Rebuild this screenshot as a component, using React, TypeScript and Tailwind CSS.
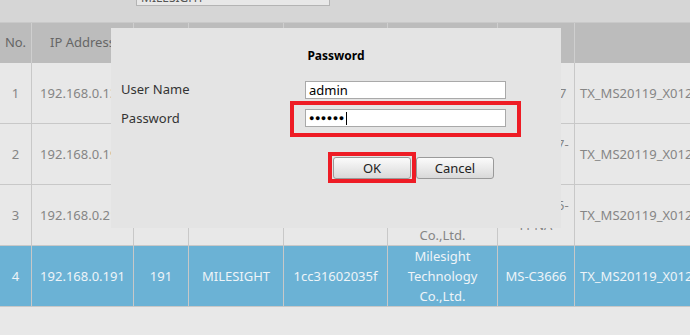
import React from "react";

const widths = [32, 102, 55, 95, 104, 110, 77, 240];

type Row = string[];

const rows: Row[] = [
  ["1", "192.168.0.136", "136", "MILESIGHT", "1cc316020a1b", "Milesight Technology Co.,Ltd.", "MS-C2967", "TX_MS20119_X0120_2016"],
  ["2", "192.168.0.195", "195", "MILESIGHT", "1cc31601f2c4", "Milesight Technology Co.,Ltd.", "MS-C2967-FPNB", "TX_MS20119_X0120_2016"],
  ["3", "192.168.0.217", "217", "MILESIGHT", "1cc3160210ee", "Milesight Technology Co.,Ltd.", "MS-C2965-FPNA", "TX_MS20119_X0120_2016"],
  ["4", "192.168.0.191", "191", "MILESIGHT", "1cc31602035f", "Milesight Technology Co.,Ltd.", "MS-C3666", "TX_MS20119_X0120_2016"],
];

const Cell: React.FC<{ w: number; last?: boolean; left?: boolean; children?: React.ReactNode }> = ({ w, last, left, children }) => (
  <div
    style={{ width: w }}
    className={`shrink-0 h-full flex items-center px-[4px] leading-[20px] ${left ? "justify-start pl-[5px] whitespace-nowrap" : "justify-center text-center"} ${last ? "" : "border-r border-[#c8c8c8]"}`}
  >
    {children}
  </div>
);

export default function App() {
  return (
    <div className="relative w-[690px] h-[335px] overflow-hidden bg-[#e8e8e8] font-['Noto_Sans',sans-serif] text-[12px]">
      {/* top search strip */}
      <div className="h-[22px] bg-[#d6d6d6] overflow-hidden">
        <div className="ml-[136px] -mt-[14px] w-[194px] h-[20px] bg-[#e8e8e8] border border-[#b4b4b4] pl-[4px] pt-[2px] text-[12px] text-[#555] leading-[18px]">
          MILESIGHT
        </div>
      </div>

      {/* header */}
      <div className="flex h-[41px] bg-[#bcbcbc] border-t border-[#c9c9c9] text-[#666] text-[13px]">
        {widths.map((w, i) => (
          <div
            key={i}
            style={{ width: w }}
            className={`shrink-0 h-full flex items-center justify-center ${i < widths.length - 1 ? "border-r border-[#cfcfcf]" : ""}`}
          >
            {i === 0 ? "No." : i === 1 ? "IP Address" : ""}
          </div>
        ))}
      </div>

      {/* body rows */}
      {rows.map((r, ri) => {
        const sel = ri === 3;
        return (
          <div
            key={ri}
            className={`flex h-[61px] border-b border-[#c8c8c8] text-[13px] ${sel ? "bg-[#6bb2d5] text-[#eef4f8]" : "bg-[#e8e8e8] text-[#858585]"}`}
          >
            {r.map((t, ci) => (
              <Cell key={ci} w={widths[ci]} last={ci === widths.length - 1} left={ci === widths.length - 1}>
                {t}
              </Cell>
            ))}
          </div>
        );
      })}

      {/* password dialog */}
      <div className="absolute left-[111px] top-[28px] w-[450px] h-[200px] bg-[#e4e4e4] flex flex-col">
        <div className="pt-[18px] h-[38px] text-center font-bold text-[12px] leading-[20px] text-black">Password</div>

        <div className="mt-[15px] flex items-center h-[18px]">
          <div className="w-[194px] pl-[10px] text-[13px] text-[#333]">User Name</div>
          <div className="w-[201px] h-[18px] bg-white border border-[#a9a9a9] px-[3px] text-[13px] leading-[16px] text-black">admin</div>
        </div>

        <div className="mt-[2px] flex items-center">
          <div className="w-[179px] pl-[10px] text-[13px] text-[#333]">Password</div>
          <div className="border-4 border-[#ee1c25] px-[11px] pt-[4px] pb-[6px]">
            <div className="w-[201px] h-[18px] bg-white border border-[#a9a9a9] pl-[3px] flex items-center">
              <span className="text-[9px] tracking-[0.5px] text-black leading-[16px]">●●●●●●</span>
              <span className="ml-[1px] w-px h-[13px] bg-black" />
            </div>
          </div>
        </div>

        <div className="mt-[15px] pl-[217px] flex items-start">
          <div className="border-4 border-[#ee1c25] px-px pt-px">
            <button className="w-[78px] h-[22px] rounded-[3px] border border-[#9a9a9a] bg-linear-to-b from-[#fbfbfb] to-[#d9d9d9] text-[13px] text-[#222] leading-[20px]">
              OK
            </button>
          </div>
          <button className="mt-[5px] w-[78px] h-[22px] rounded-[3px] border border-[#9a9a9a] bg-linear-to-b from-[#fbfbfb] to-[#d9d9d9] text-[13px] text-[#222] leading-[20px]">
            Cancel
          </button>
        </div>
      </div>
    </div>
  );
}
